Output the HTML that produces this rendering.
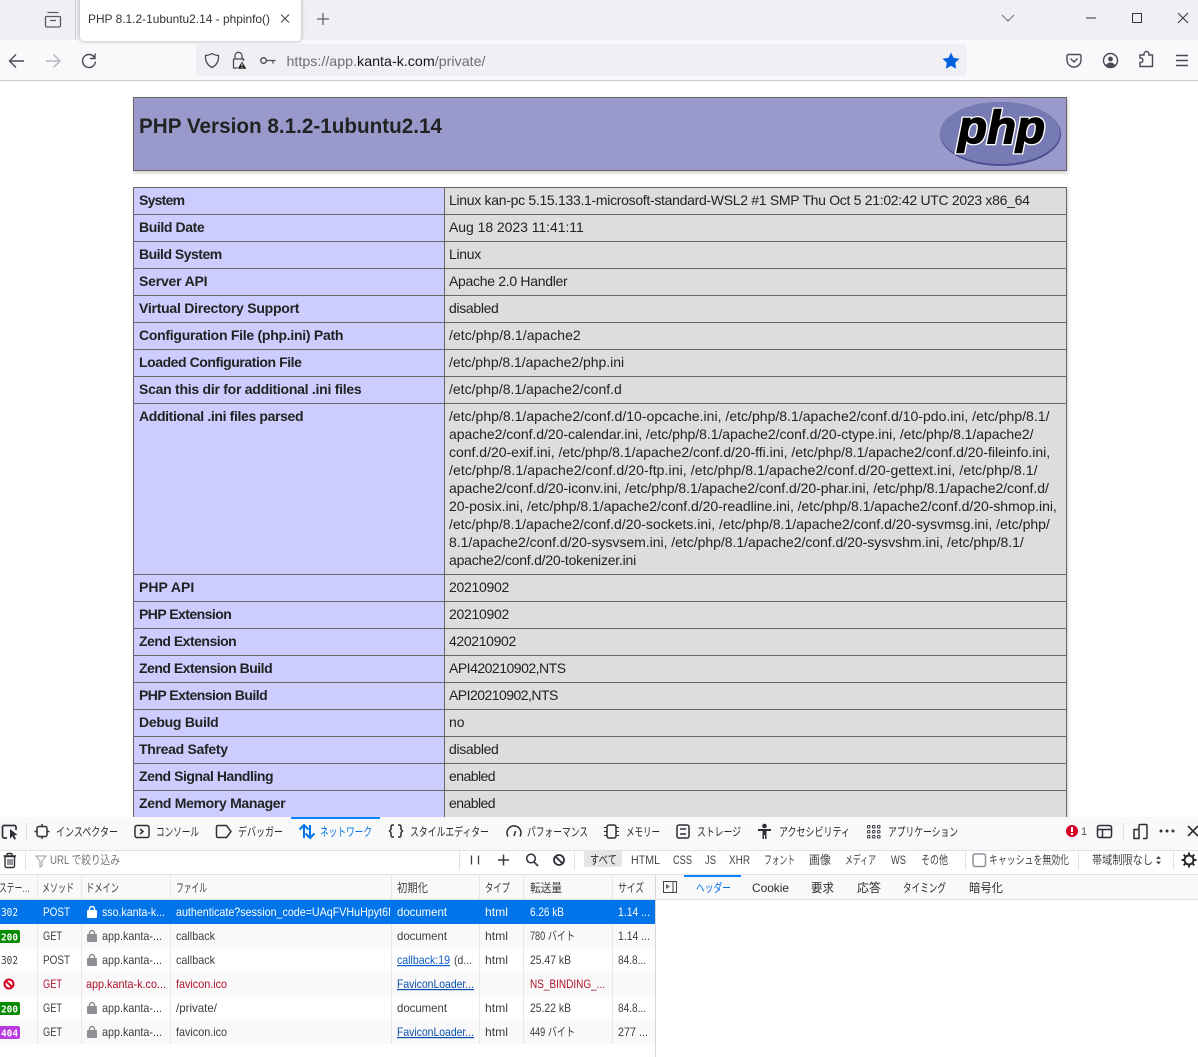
<!DOCTYPE html>
<html lang="ja"><head><meta charset="utf-8"><title>PHP 8.1.2-1ubuntu2.14 - phpinfo()</title>
<style>
html,body{margin:0;padding:0;width:1198px;height:1057px;overflow:hidden;background:#fff}
svg{position:absolute;display:block}
svg text{font-family:"Liberation Sans","Noto Sans CJK JP",sans-serif;white-space:pre}
#page{position:absolute;left:0;top:81px;width:1198px;height:736px;overflow:hidden;background:#fff}
#hdr{position:absolute;left:133px;top:16px;width:932px;height:72px;background:#99c;border:1px solid #666;box-shadow:1px 2px 3px #ccc}
table{position:absolute;left:133px;top:106px;width:934px;border-collapse:collapse;table-layout:fixed;box-shadow:1px 2px 3px #ccc;font:14px/18px "Liberation Sans",sans-serif;color:#222}
td{border:1px solid #666;padding:3px 5px 5px;vertical-align:top;height:18px;white-space:nowrap;overflow:hidden}
td.e{background:#ccf;font-weight:bold}
td.v{background:#ddd;padding-left:4px}
</style></head><body>
<div id="page">
<div id="hdr"></div>
<svg style="left:133px;top:16px" width="934" height="74" viewBox="133 97 934 74">
<text x="139" y="133" textLength="303" lengthAdjust="spacingAndGlyphs" style="font:bold 21px 'Liberation Sans',sans-serif" fill="#222">PHP Version 8.1.2-1ubuntu2.14</text>
<ellipse cx="1000.5" cy="134" rx="60.5" ry="32" fill="#4b4f8f"/>
<ellipse cx="1000" cy="133" rx="60" ry="31" fill="#777bb3"/>
<text x="958" y="143" textLength="87" lengthAdjust="spacingAndGlyphs" style="font:italic bold 46px 'Liberation Sans',sans-serif" fill="#000" stroke="#fff" stroke-width="4">php</text>
<text x="958" y="143" textLength="87" lengthAdjust="spacingAndGlyphs" style="font:italic bold 46px 'Liberation Sans',sans-serif" fill="#000" stroke="#000" stroke-width="1.4">php</text>
</svg>
<table><colgroup><col style="width:311px"><col></colgroup>
<tr><td class="e" style="letter-spacing:-.75px">System</td><td class="v" style="letter-spacing:-.3px">Linux kan-pc 5.15.133.1-microsoft-standard-WSL2 #1 SMP Thu Oct 5 21:02:42 UTC 2023 x86_64</td></tr>
<tr><td class="e" style="letter-spacing:-.4px">Build Date</td><td class="v" style="letter-spacing:-.05px">Aug 18 2023 11:41:11</td></tr>
<tr><td class="e" style="letter-spacing:-.5px">Build System</td><td class="v" style="letter-spacing:-.3px">Linux</td></tr>
<tr><td class="e" style="letter-spacing:-.2px">Server API</td><td class="v" style="letter-spacing:-.3px">Apache 2.0 Handler</td></tr>
<tr><td class="e" style="letter-spacing:-.24px">Virtual Directory Support</td><td class="v" style="letter-spacing:-.33px">disabled</td></tr>
<tr><td class="e" style="letter-spacing:-.27px">Configuration File (php.ini) Path</td><td class="v" style="letter-spacing:.05px">/etc/php/8.1/apache2</td></tr>
<tr><td class="e" style="letter-spacing:-.44px">Loaded Configuration File</td><td class="v" style="letter-spacing:-.03px">/etc/php/8.1/apache2/php.ini</td></tr>
<tr><td class="e" style="letter-spacing:-.26px">Scan this dir for additional .ini files</td><td class="v">/etc/php/8.1/apache2/conf.d</td></tr>
<tr><td class="e" style="letter-spacing:-.36px">Additional .ini files parsed</td><td class="v"><span style="letter-spacing:.02px">/etc/php/8.1/apache2/conf.d/10-opcache.ini, /etc/php/8.1/apache2/conf.d/10-pdo.ini, /etc/php/8.1/</span><br><span style="letter-spacing:-.05px">apache2/conf.d/20-calendar.ini, /etc/php/8.1/apache2/conf.d/20-ctype.ini, /etc/php/8.1/apache2/</span><br><span style="letter-spacing:-.01px">conf.d/20-exif.ini, /etc/php/8.1/apache2/conf.d/20-ffi.ini, /etc/php/8.1/apache2/conf.d/20-fileinfo.ini,</span><br><span style="letter-spacing:.09px">/etc/php/8.1/apache2/conf.d/20-ftp.ini, /etc/php/8.1/apache2/conf.d/20-gettext.ini, /etc/php/8.1/</span><br><span style="letter-spacing:-.04px">apache2/conf.d/20-iconv.ini, /etc/php/8.1/apache2/conf.d/20-phar.ini, /etc/php/8.1/apache2/conf.d/</span><br><span style="letter-spacing:-.04px">20-posix.ini, /etc/php/8.1/apache2/conf.d/20-readline.ini, /etc/php/8.1/apache2/conf.d/20-shmop.ini,</span><br>/etc/php/8.1/apache2/conf.d/20-sockets.ini, /etc/php/8.1/apache2/conf.d/20-sysvmsg.ini, /etc/php/<br><span style="letter-spacing:-.03px">8.1/apache2/conf.d/20-sysvsem.ini, /etc/php/8.1/apache2/conf.d/20-sysvshm.ini, /etc/php/8.1/</span><br><span style="letter-spacing:-.22px">apache2/conf.d/20-tokenizer.ini</span></td></tr>
<tr><td class="e">PHP API</td><td class="v" style="letter-spacing:-.28px">20210902</td></tr>
<tr><td class="e" style="letter-spacing:-.54px">PHP Extension</td><td class="v" style="letter-spacing:-.28px">20210902</td></tr>
<tr><td class="e" style="letter-spacing:-.5px">Zend Extension</td><td class="v" style="letter-spacing:-.35px">420210902</td></tr>
<tr><td class="e" style="letter-spacing:-.5px">Zend Extension Build</td><td class="v" style="letter-spacing:-.5px">API420210902,NTS</td></tr>
<tr><td class="e" style="letter-spacing:-.53px">PHP Extension Build</td><td class="v" style="letter-spacing:-.53px">API20210902,NTS</td></tr>
<tr><td class="e" style="letter-spacing:-.27px">Debug Build</td><td class="v">no</td></tr>
<tr><td class="e" style="letter-spacing:-.3px">Thread Safety</td><td class="v" style="letter-spacing:-.33px">disabled</td></tr>
<tr><td class="e" style="letter-spacing:-.45px">Zend Signal Handling</td><td class="v" style="letter-spacing:-.54px">enabled</td></tr>
<tr><td class="e" style="letter-spacing:-.32px">Zend Memory Manager</td><td class="v" style="letter-spacing:-.54px">enabled</td></tr>
<tr><td class="e">Zend Multibyte Support</td><td class="v">disabled</td></tr>
</table>
</div>

<!-- browser chrome -->
<svg style="left:0;top:0" width="1198" height="81" viewBox="0 0 1198 81">
<rect width="1198" height="40" fill="#f0f0f4"/>
<rect y="40" width="1198" height="40" fill="#f9f9fb"/>
<rect y="80" width="1198" height="1" fill="#ccc"/>
<rect x="75" y="0" width="1" height="40" fill="#cfcfd4"/>
<g fill="none" stroke="#5b5b66" stroke-width="1.3">
<path d="M46.5 16.5h13a1 1 0 0 1 1 1v8a1.5 1.5 0 0 1-1.5 1.500h-12a1.500 1.500 0 0 1-1.500-1.500v-8a1 1 0 0 1 1-1zM47.500 12.500h11M50 20.500h6"/>
</g>
<rect x="80" y="-4" width="221" height="45" rx="4" fill="#fff" style="filter:drop-shadow(0 0 2px rgba(0,0,0,.3))"/>
<text x="88" y="23" font-size="12" textLength="182" lengthAdjust="spacingAndGlyphs" fill="#333">PHP 8.1.2-1ubuntu2.14 - phpinfo()</text>
<path d="M281 14.500l8 8M289 14.500l-8 8" stroke="#444" fill="none"/>
<path d="M323 13v12M317 19h12" stroke="#5b5b66" stroke-width="1.2" fill="none"/>
<path d="M1002 15l6 6 6-6" stroke="#777" stroke-width="1.200" fill="none"/>
<path d="M1086 18h10" stroke="#333" fill="none"/>
<rect x="1132.500" y="13.500" width="9" height="9" stroke="#333" fill="none"/>
<path d="M1178 13l10 10M1188 13l-10 10" stroke="#333" fill="none"/>
<g fill="none" stroke="#4a4a55" stroke-width="1.400">
<path d="M24 61H10M16 54.500L9.500 61l6.500 6.500" />
<path d="M60 61H46M53.500 54.500L60 61l-6.500 6.500" stroke="#b4b4bb"/>
<path d="M94.500 57.500a6.500 6.500 0 1 0 1 4M95 53.500v5h-5"/>
</g>
<rect x="196" y="44" width="771" height="32" rx="4" fill="#f0f0f4"/>
<g fill="none" stroke="#4a4a55" stroke-width="1.300">
<path d="M212 53.500c2 1.300 4 1.800 6.500 2 .3 5-1.500 9.500-6.500 12-5-2.500-6.800-7-6.500-12 2.500-.2 4.500-.7 6.500-2z"/>
<path d="M235 59v-3.200a3.500 3.500 0 0 1 7 0V59M233.500 59h10v2M233.500 59v9h5"/>
<circle cx="263.500" cy="60.500" r="2.800"/><path d="M266.500 60.500h9M273 60.500v3"/>
</g>
<path d="M242 61l4.800 8h-9.600z" fill="#222" stroke="#f0f0f4" stroke-width=".6"/><path d="M242 63.500v2.500M242 67v1" stroke="#fff"/>
<text x="286.500" y="66" font-size="14" fill="#6d6d78" textLength="199" lengthAdjust="spacingAndGlyphs">https://app.<tspan fill="#15141a">kanta-k.com</tspan>/private/</text>
<path d="M951 52.500l2.600 5.400 5.900.8-4.300 4.100 1 5.900-5.200-2.800-5.200 2.800 1-5.900-4.300-4.100 5.900-.8z" fill="#0060df"/>
<g fill="none" stroke="#4a4a55" stroke-width="1.400">
<path d="M1068.500 54.500h11a1.500 1.500 0 0 1 1.500 1.500v4a7 7 0 0 1-14 0v-4a1.500 1.500 0 0 1 1.500-1.500zM1070.500 58.500l3.500 3.500 3.500-3.500"/>
<circle cx="1110.500" cy="60.500" r="7"/>
<path d="M1140 55h4v-1a2.500 2.500 0 0 1 5 0v1h3.500v11.500h-12.500v-4h1a2.300 2.300 0 0 0 0-4.500h-1z"/>
<path d="M1176 55.500h12M1176 60.500h12M1176 65.500h12"/>
</g>
<circle cx="1110.500" cy="59" r="2.400" fill="#4a4a55"/><path d="M1105.500 66c1-2.500 3-3.500 5-3.500s4 1 5 3.500c-3 1.800-7 1.800-10 0z" fill="#4a4a55"/>
</svg>

<!-- devtools -->
<svg style="left:0;top:817px" width="1198" height="240" viewBox="0 817 1198 240">
<defs><path id="lk" d="M-4 0h8a1 1 0 0 1 1 1v6a1 1 0 0 1-1 1h-8a1 1 0 0 1-1-1v-6a1 1 0 0 1 1-1zM-3.200 0v-1a3.200 3.200 0 0 1 6.400 0v1h-1.500v-1a1.700 1.700 0 0 0-3.400 0v1z"/></defs>
<rect x="0" y="817" width="1198" height="240" fill="#fff"/>
<rect y="817" width="1198" height="33" fill="#f9f9fa"/>
<rect y="850" width="1198" height="1" fill="#e0e0e2"/>
<rect y="874" width="1198" height="1" fill="#e0e0e2"/>
<rect y="875" width="1198" height="24" fill="#f9f9fa"/>
<rect y="899" width="1198" height="1" fill="#e0e0e2"/>
<rect x="291" y="817" width="89" height="2" fill="#0a84ff"/>
<!-- tool icons -->
<g fill="none" stroke="#2e2e36" stroke-width="1.500">
<path d="M7 838H4a1.500 1.500 0 0 1-1.500-1.500V827A1.500 1.500 0 0 1 4 825.500h10.500A1.500 1.500 0 0 1 16 827v3" stroke-width="1.700"/>
<rect x="37" y="826.500" width="10" height="10" rx="2"/>
<path d="M42 824v2.500M42 836.500v2.500M34.500 831.500H37M47 831.500h2.500"/>
<rect x="135" y="825.500" width="14" height="12" rx="2"/><path d="M140 829l3 2.500-3 2.500"/>
<path d="M218 825.500h8.500l4.500 6-4.500 6H218a1.500 1.500 0 0 1-1.500-1.500v-9a1.500 1.500 0 0 1 1.500-1.500z"/>
<path d="M394 825h-1.500a1.500 1.500 0 0 0-1.500 1.500v3l-1.500 1.500 1.500 1.500v3a1.500 1.500 0 0 0 1.500 1.500h1.500M398 825h1.500a1.500 1.500 0 0 1 1.500 1.500v3l1.500 1.500-1.500 1.500v3a1.500 1.500 0 0 1-1.500 1.500H398"/>
<path d="M508 836.500a7 7 0 1 1 12 0"/><path d="M514 836l1.500-5"/>
<rect x="607" y="825" width="9" height="13" rx="2"/><path d="M604 827.500h3M604 831.500h3M604 835.500h3M616 827.500h3M616 831.500h3M616 835.500h3" stroke-width="1"/>
<rect x="677" y="825" width="12" height="13" rx="2"/><path d="M680 829h6M680 834h6"/>
<rect x="1097.500" y="825.500" width="14" height="12" rx="2"/><path d="M1097.500 829.500h14M1102.500 829.500v8"/>
<path d="M1139 830.500v-5a1 1 0 0 1 1-1h6a1 1 0 0 1 1 1v12a1 1 0 0 1-1 1h-3M1134 829.500h5v9h-5z"/>
<path d="M1188 826l10 10M1198 826l-10 10" stroke-width="1.600"/>
</g>
<path d="M10 829v9.500l2.500-2.300 1.800 3.500 1.700-.9-1.800-3.400 3.300-.4z" fill="#2e2e36"/>
<rect x="26" y="823" width="1" height="18" fill="#e0e0e2"/>
<g fill="none" stroke="#0074e8" stroke-width="2"><path d="M304 838v-13M299.500 829.500l4.500-4.500 4.500 4.500M310 825v13M305.500 833.500l4.500 4.500 4.500-4.500"/></g>
<circle cx="764.500" cy="826" r="2.300" fill="#2e2e36"/><path d="M758 829h13v2h-4.500v8h-1.500v-4h-1v4h-1.500v-8H758z" fill="#2e2e36"/>
<g fill="none" stroke="#3a3a42"><rect x="867.500" y="825.500" width="2.500" height="2.500" rx=".8"/><rect x="872.500" y="825.500" width="2.500" height="2.500" rx=".8"/><rect x="877.500" y="825.500" width="2.500" height="2.500" rx=".8"/><rect x="867.500" y="830.500" width="2.500" height="2.500" rx=".8"/><rect x="872.500" y="830.500" width="2.500" height="2.500" rx=".8"/><rect x="877.500" y="830.500" width="2.500" height="2.500" rx=".8"/><rect x="867.500" y="835.500" width="2.500" height="2.500" rx=".8"/><rect x="872.500" y="835.500" width="2.500" height="2.500" rx=".8"/><rect x="877.500" y="835.500" width="2.500" height="2.500" rx=".8"/></g>
<g font-size="12" fill="#2a2a2e">
<text x="56" y="836" textLength="62" lengthAdjust="spacingAndGlyphs">インスペクター</text>
<text x="156" y="836" textLength="43" lengthAdjust="spacingAndGlyphs">コンソール</text>
<text x="238" y="836" textLength="45" lengthAdjust="spacingAndGlyphs">デバッガー</text>
<text x="320" y="836" textLength="52" lengthAdjust="spacingAndGlyphs" fill="#0074e8">ネットワーク</text>
<text x="410" y="836" textLength="79" lengthAdjust="spacingAndGlyphs">スタイルエディター</text>
<text x="527" y="836" textLength="61" lengthAdjust="spacingAndGlyphs">パフォーマンス</text>
<text x="626" y="836" textLength="34" lengthAdjust="spacingAndGlyphs">メモリー</text>
<text x="697" y="836" textLength="44" lengthAdjust="spacingAndGlyphs">ストレージ</text>
<text x="779" y="836" textLength="71" lengthAdjust="spacingAndGlyphs">アクセシビリティ</text>
<text x="888" y="836" textLength="70" lengthAdjust="spacingAndGlyphs">アプリケーション</text>
</g>
<circle cx="1072" cy="831" r="6" fill="#d70022"/><rect x="1071" y="827" width="2" height="5" fill="#fff"/><rect x="1071" y="833" width="2" height="2" fill="#fff"/>
<text x="1081" y="835" font-size="11" fill="#555">1</text>
<rect x="1123" y="823" width="1" height="18" fill="#e0e0e2"/>
<circle cx="1161" cy="831" r="1.500" fill="#333"/><circle cx="1167" cy="831" r="1.500" fill="#333"/><circle cx="1173" cy="831" r="1.500" fill="#333"/>
<!-- toolbar -->
<g fill="none" stroke="#2e2e36" stroke-width="1.400">
<path d="M5 856.500h9.500v9.500a1.500 1.500 0 0 1-1.500 1.500H6.500a1.500 1.500 0 0 1-1.500-1.500zM3.500 856h12.500M7 855.500v-1a1 1 0 0 1 1-1h3a1 1 0 0 1 1 1v1"/>
<path d="M8 859v6M10 859v6M12 859v6" stroke-width="1"/>
</g>
<rect x="25" y="852" width="1" height="18" fill="#e0e0e2"/>
<path d="M36 856h10l-4 5v5l-2 1v-6z" fill="none" stroke="#999" stroke-width="1"/>
<text x="50" y="864" font-size="12" textLength="70" lengthAdjust="spacingAndGlyphs" fill="#737373">URL で絞り込み</text>
<rect x="459" y="852" width="1" height="18" fill="#e0e0e2"/>
<rect x="574" y="852" width="1" height="18" fill="#e0e0e2"/>
<g fill="none" stroke="#3a3a42" stroke-width="1.300"><path d="M471.500 855.500v9M478.500 855.500v9"/><path d="M503.500 854.500v11M498 860h11" stroke-width="1.500"/>
<circle cx="531" cy="858.500" r="4.300" stroke-width="1.600"/><path d="M534 862l4 4" stroke-width="1.800"/></g>
<g fill="none" stroke="#2e2e36" stroke-width="1.800"><circle cx="559" cy="860" r="5"/><path d="M555.500 856.500l7 7"/></g>
<rect x="584" y="851" width="38" height="16" rx="2" fill="#e5e5e7"/>
<g font-size="12" fill="#2a2a2e">
<text x="590" y="864" textLength="27" lengthAdjust="spacingAndGlyphs">すべて</text>
<text x="631" y="864" textLength="29" lengthAdjust="spacingAndGlyphs" fill="#444">HTML</text>
<text x="673" y="864" textLength="19" lengthAdjust="spacingAndGlyphs" fill="#444">CSS</text>
<text x="705" y="864" textLength="11" lengthAdjust="spacingAndGlyphs" fill="#444">JS</text>
<text x="729" y="864" textLength="21" lengthAdjust="spacingAndGlyphs" fill="#444">XHR</text>
<text x="764" y="864" textLength="31" lengthAdjust="spacingAndGlyphs" fill="#444">フォント</text>
<text x="809" y="864" textLength="22" lengthAdjust="spacingAndGlyphs" fill="#444">画像</text>
<text x="845" y="864" textLength="31" lengthAdjust="spacingAndGlyphs" fill="#444">メディア</text>
<text x="891" y="864" textLength="15" lengthAdjust="spacingAndGlyphs" fill="#444">WS</text>
<text x="921" y="864" textLength="27" lengthAdjust="spacingAndGlyphs" fill="#444">その他</text>
<text x="989" y="864" textLength="80" lengthAdjust="spacingAndGlyphs" fill="#444">キャッシュを無効化</text>
<text x="1092" y="864" textLength="61" lengthAdjust="spacingAndGlyphs" fill="#444">帯域制限なし</text>
</g>
<rect x="965" y="852" width="1" height="18" fill="#e0e0e2"/><rect x="1078" y="852" width="1" height="18" fill="#e0e0e2"/><rect x="1173" y="852" width="1" height="18" fill="#e0e0e2"/>
<rect x="973" y="854" width="12.500" height="12.500" rx="2" fill="#fff" stroke="#8f8f9d" stroke-width="1.500"/>
<path d="M1156 859l2.500-3 2.500 3zM1156 861.500l2.500 3 2.500-3z" fill="#444"/>
<g fill="none" stroke="#2a2a2e"><circle cx="1189" cy="860" r="4.500" stroke-width="2"/><path d="M1189 852.500v3M1189 864.500v3M1181.500 860h3M1193.500 860h3M1183.700 854.700l2.100 2.100M1192.200 863.200l2.100 2.100M1183.700 865.300l2.100-2.100M1192.200 856.800l2.100-2.100" stroke-width="2"/></g>
<!-- rows bg -->
<rect y="900" width="655" height="24" fill="#0074e8"/>
<rect y="924" width="655" height="24" fill="#f9f9fa"/>
<rect y="972" width="655" height="24" fill="#f9f9fa"/>
<rect y="1020" width="655" height="24" fill="#f9f9fa"/>
<g fill="#e8e8ea">
<rect x="37" y="875" width="1" height="25"/><rect x="81" y="875" width="1" height="25"/><rect x="170" y="875" width="1" height="25"/><rect x="391" y="875" width="1" height="25"/><rect x="479" y="875" width="1" height="25"/><rect x="523" y="875" width="1" height="25"/><rect x="612" y="875" width="1" height="25"/>
<rect x="37" y="924" width="1" height="120"/><rect x="81" y="924" width="1" height="120"/><rect x="170" y="924" width="1" height="120"/><rect x="391" y="924" width="1" height="120"/><rect x="479" y="924" width="1" height="120"/><rect x="523" y="924" width="1" height="120"/><rect x="612" y="924" width="1" height="120"/>
</g>
<rect x="655" y="875" width="1" height="182" fill="#d7d7db"/>
<!-- header -->
<g font-size="12" fill="#3c3c42">
<text x="-1" y="892" textLength="31" lengthAdjust="spacingAndGlyphs">ステー…</text>
<text x="42" y="892" textLength="32" lengthAdjust="spacingAndGlyphs">メソッド</text>
<text x="86" y="892" textLength="33" lengthAdjust="spacingAndGlyphs">ドメイン</text>
<text x="176" y="892" textLength="31" lengthAdjust="spacingAndGlyphs">ファイル</text>
<text x="397" y="892" textLength="31" lengthAdjust="spacingAndGlyphs">初期化</text>
<text x="485" y="892" textLength="25" lengthAdjust="spacingAndGlyphs">タイプ</text>
<text x="530" y="892" textLength="32" lengthAdjust="spacingAndGlyphs">転送量</text>
<text x="618" y="892" textLength="26" lengthAdjust="spacingAndGlyphs">サイズ</text>
</g>
<rect x="684" y="875" width="57" height="2" fill="#0a84ff"/>
<rect x="663.500" y="881.500" width="13" height="11" fill="none" stroke="#444"/><path d="M666 884l4 2.500-4 2.500z" fill="#666"/><path d="M673 882v10" stroke="#444"/>
<g font-size="12" fill="#2a2a2e">
<text x="696" y="892" textLength="35" lengthAdjust="spacingAndGlyphs" fill="#0074e8">ヘッダー</text>
<text x="752" y="892" textLength="37" lengthAdjust="spacingAndGlyphs">Cookie</text>
<text x="811" y="892" textLength="23" lengthAdjust="spacingAndGlyphs">要求</text>
<text x="857" y="892" textLength="24" lengthAdjust="spacingAndGlyphs">応答</text>
<text x="903" y="892" textLength="43" lengthAdjust="spacingAndGlyphs">タイミング</text>
<text x="969" y="892" textLength="34" lengthAdjust="spacingAndGlyphs">暗号化</text>
</g>
<!-- row 1 -->
<g font-size="12" fill="#fff">
<text x="1" y="916" style="font:10.500px 'DejaVu Sans Mono',monospace" fill="#fff" textLength="17" lengthAdjust="spacingAndGlyphs">302</text>
<text x="43" y="916" textLength="27" lengthAdjust="spacingAndGlyphs">POST</text>
<use href="#lk" x="92" y="910" fill="#fff" fill-rule="evenodd"/>
<text x="102" y="916" textLength="63" lengthAdjust="spacingAndGlyphs">sso.kanta-k...</text>
<text x="176" y="916" textLength="215" lengthAdjust="spacingAndGlyphs">authenticate?session_code=UAqFVHuHpyt6I</text>
<text x="397" y="916" textLength="50" lengthAdjust="spacingAndGlyphs">document</text>
<text x="485" y="916" textLength="23" lengthAdjust="spacingAndGlyphs">html</text>
<text x="530" y="916" textLength="34" lengthAdjust="spacingAndGlyphs">6.26 kB</text>
<text x="618" y="916" textLength="32" lengthAdjust="spacingAndGlyphs">1.14 ...</text>
</g>
<!-- other rows -->
<g font-size="12" fill="#3c3c42">
<text x="43" y="940" textLength="19" lengthAdjust="spacingAndGlyphs">GET</text>
<use href="#lk" x="92" y="934" fill="#8f8f94"/>
<text x="102" y="940" textLength="60" lengthAdjust="spacingAndGlyphs">app.kanta-...</text>
<text x="176" y="940" textLength="39" lengthAdjust="spacingAndGlyphs">callback</text>
<text x="397" y="940" textLength="50" lengthAdjust="spacingAndGlyphs">document</text>
<text x="485" y="940" textLength="23" lengthAdjust="spacingAndGlyphs">html</text>
<text x="530" y="940" textLength="45" lengthAdjust="spacingAndGlyphs">780 バイト</text>
<text x="618" y="940" textLength="32" lengthAdjust="spacingAndGlyphs">1.14 ...</text>

<text x="43" y="964" textLength="27" lengthAdjust="spacingAndGlyphs">POST</text>
<use href="#lk" x="92" y="958" fill="#8f8f94"/>
<text x="102" y="964" textLength="60" lengthAdjust="spacingAndGlyphs">app.kanta-...</text>
<text x="176" y="964" textLength="39" lengthAdjust="spacingAndGlyphs">callback</text>
<text x="397" y="964" textLength="53" lengthAdjust="spacingAndGlyphs" fill="#0b5cc7" text-decoration="underline">callback:19</text>
<text x="454" y="964" textLength="18" lengthAdjust="spacingAndGlyphs">(d...</text>
<text x="485" y="964" textLength="23" lengthAdjust="spacingAndGlyphs">html</text>
<text x="530" y="964" textLength="41" lengthAdjust="spacingAndGlyphs">25.47 kB</text>
<text x="618" y="964" textLength="28" lengthAdjust="spacingAndGlyphs">84.8...</text>

<g fill="#b0102e">
<text x="43" y="988" textLength="19" lengthAdjust="spacingAndGlyphs">GET</text>
<text x="86" y="988" textLength="80" lengthAdjust="spacingAndGlyphs">app.kanta-k.co...</text>
<text x="176" y="988" textLength="51" lengthAdjust="spacingAndGlyphs">favicon.ico</text>
<text x="530" y="988" textLength="75" lengthAdjust="spacingAndGlyphs">NS_BINDING_...</text>
</g>
<text x="397" y="988" textLength="77" lengthAdjust="spacingAndGlyphs" fill="#0b4fb0" text-decoration="underline">FaviconLoader...</text>

<text x="43" y="1012" textLength="19" lengthAdjust="spacingAndGlyphs">GET</text>
<use href="#lk" x="92" y="1006" fill="#8f8f94"/>
<text x="102" y="1012" textLength="60" lengthAdjust="spacingAndGlyphs">app.kanta-...</text>
<text x="176" y="1012" textLength="41" lengthAdjust="spacingAndGlyphs">/private/</text>
<text x="397" y="1012" textLength="50" lengthAdjust="spacingAndGlyphs">document</text>
<text x="485" y="1012" textLength="23" lengthAdjust="spacingAndGlyphs">html</text>
<text x="530" y="1012" textLength="41" lengthAdjust="spacingAndGlyphs">25.22 kB</text>
<text x="618" y="1012" textLength="28" lengthAdjust="spacingAndGlyphs">84.8...</text>

<text x="43" y="1036" textLength="19" lengthAdjust="spacingAndGlyphs">GET</text>
<use href="#lk" x="92" y="1030" fill="#8f8f94"/>
<text x="102" y="1036" textLength="60" lengthAdjust="spacingAndGlyphs">app.kanta-...</text>
<text x="176" y="1036" textLength="51" lengthAdjust="spacingAndGlyphs">favicon.ico</text>
<text x="397" y="1036" textLength="77" lengthAdjust="spacingAndGlyphs" fill="#0b4fb0" text-decoration="underline">FaviconLoader...</text>
<text x="485" y="1036" textLength="23" lengthAdjust="spacingAndGlyphs">html</text>
<text x="530" y="1036" textLength="45" lengthAdjust="spacingAndGlyphs">449 バイト</text>
<text x="618" y="1036" textLength="30" lengthAdjust="spacingAndGlyphs">277 ...</text>
</g>
<!-- status badges -->
<rect x="-2" y="930" width="22" height="13" rx="2" fill="#058b00"/>
<text x="1" y="940.500" style="font:bold 10px 'DejaVu Sans Mono',monospace" fill="#fff" textLength="17" lengthAdjust="spacingAndGlyphs">200</text>
<text x="1" y="964" style="font:10.500px 'DejaVu Sans Mono',monospace" fill="#3c3c42" textLength="17" lengthAdjust="spacingAndGlyphs">302</text>
<g fill="none" stroke="#d70022" stroke-width="2"><circle cx="9" cy="984" r="4.500"/><path d="M5.800 980.800l6.400 6.400"/></g>
<rect x="-2" y="1002" width="22" height="13" rx="2" fill="#058b00"/>
<text x="1" y="1012.500" style="font:bold 10px 'DejaVu Sans Mono',monospace" fill="#fff" textLength="17" lengthAdjust="spacingAndGlyphs">200</text>
<rect x="-2" y="1026" width="22" height="13" rx="2" fill="#b83ae0"/>
<text x="1" y="1036.500" style="font:bold 10px 'DejaVu Sans Mono',monospace" fill="#fff" textLength="17" lengthAdjust="spacingAndGlyphs">404</text>
</svg>
</body></html>
